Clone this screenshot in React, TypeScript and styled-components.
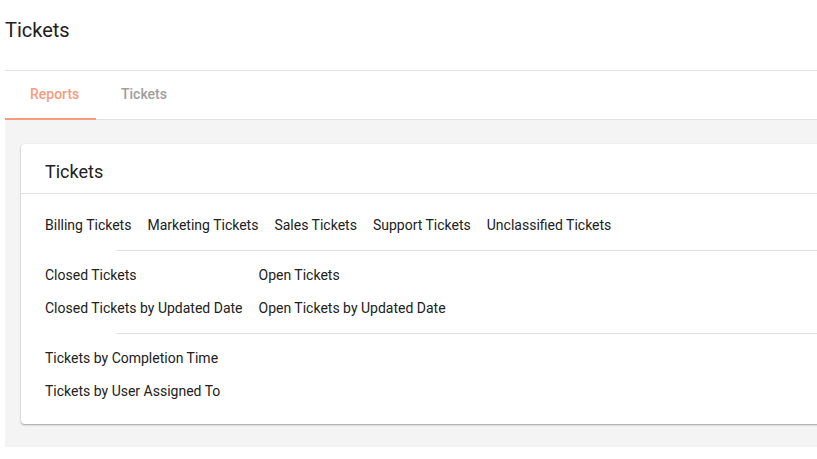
import styled, { createGlobalStyle } from "styled-components";

const GlobalStyle = createGlobalStyle`
  html, body {
    margin: 0;
    padding: 0;
    background: #ffffff;
    overflow: hidden;
  }
  body {
    font-family: Roboto, "Noto Sans", Arial, sans-serif;
    color: #212121;
  }
`;

const Page = styled.div`
  width: 860px;
  padding-left: 5px;
  box-sizing: border-box;
`;

const PageHeader = styled.header`
  height: 70px;
  display: flex;
  align-items: center;
  border-bottom: 1px solid #e0e0e0;
`;

const PageTitle = styled.h1`
  margin: 0;
  font-size: 20px;
  font-weight: 400;
  line-height: 1;
  color: #212121;
  transform: translateY(-5px);
`;

const TabBar = styled.nav`
  display: flex;
  height: 48px;
  border-bottom: 1px solid #e0e0e0;
`;

const Tab = styled.div<{ $active?: boolean }>`
  display: flex;
  align-items: center;
  padding: 0 16px 4px 25px;
  min-width: 50px;
  font-size: 14px;
  font-weight: 500;
  color: ${(p) => (p.$active ? "#f59d7e" : "#9e9e9e")};
  box-shadow: ${(p) => (p.$active ? "inset 0 -2px 0 #f59d7e" : "none")};
  margin-bottom: -1px;
`;

const Content = styled.main`
  background: #f4f4f4;
  padding: 24px 0 23px 16px;
`;

const Card = styled.section`
  background: #ffffff;
  border-radius: 4px;
  box-shadow: 0 1px 2px rgba(0, 0, 0, 0.35), 0 0 1px rgba(0, 0, 0, 0.08);
`;

const CardHeader = styled.div`
  height: 50px;
  display: flex;
  align-items: center;
  padding: 6px 24px 0;
  box-sizing: border-box;
  border-bottom: 1px solid #e0e0e0;
  font-size: 18px;
  color: #212121;
`;

const CardBody = styled.div`
  padding: 7px 0 8px;
`;

const Group = styled.div<{ $columns: number }>`
  display: grid;
  grid-template-columns: repeat(${(p) => p.$columns}, max-content);
  column-gap: 16px;
  padding: 8px 24px;
`;

const ReportLink = styled.a`
  font-size: 14px;
  line-height: 33px;
  color: #212121;
  text-decoration: none;
  white-space: nowrap;
`;

const Divider = styled.hr`
  margin: 0 0 0 96px;
  border: 0;
  border-top: 1px solid #e0e0e0;
`;

const groups: { columns: number; items: string[] }[] = [
  {
    columns: 5,
    items: [
      "Billing Tickets",
      "Marketing Tickets",
      "Sales Tickets",
      "Support Tickets",
      "Unclassified Tickets",
    ],
  },
  {
    columns: 2,
    items: [
      "Closed Tickets",
      "Open Tickets",
      "Closed Tickets by Updated Date",
      "Open Tickets by Updated Date",
    ],
  },
  {
    columns: 1,
    items: ["Tickets by Completion Time", "Tickets by User Assigned To"],
  },
];

export default function App() {
  return (
    <>
      <GlobalStyle />
      <Page>
        <PageHeader>
          <PageTitle>Tickets</PageTitle>
        </PageHeader>
        <TabBar>
          <Tab $active>Reports</Tab>
          <Tab>Tickets</Tab>
        </TabBar>
        <Content>
          <Card>
            <CardHeader>Tickets</CardHeader>
            <CardBody>
              {groups.map((group, i) => (
                <div key={i}>
                  {i > 0 && <Divider />}
                  <Group $columns={group.columns}>
                    {group.items.map((label) => (
                      <ReportLink key={label} href="#">
                        {label}
                      </ReportLink>
                    ))}
                  </Group>
                </div>
              ))}
            </CardBody>
          </Card>
        </Content>
      </Page>
    </>
  );
}
